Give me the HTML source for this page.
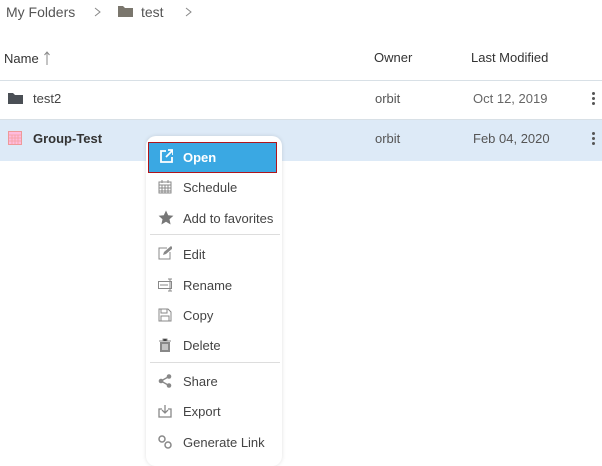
<!DOCTYPE html>
<html><head><style>
body{margin:0;width:602px;height:460px;background:#fff;font-family:"Liberation Sans",sans-serif;position:relative;overflow:hidden;color:#333}
.a{position:absolute;white-space:nowrap}
.menu{position:absolute;left:146px;top:136px;width:136px;height:330px;background:#fff;border-radius:10px;box-shadow:0 0 4px rgba(0,0,0,.12)}
.it{position:absolute;left:37px;font-size:13px;color:#444}
.ic{position:absolute;left:12px;width:14px;height:14px}
.sep{position:absolute;left:4px;width:130px;height:1px;background:#ddd}
.kb{position:absolute;left:592px;width:3px}
.kb i{display:block;width:3px;height:3px;border-radius:50%;background:#555;margin-bottom:2px}
</style></head><body>
<div class="a" style="left:6px;top:4px;font-size:14px;color:#555">My Folders</div>
<svg class="a" style="left:94px;top:7px" width="8" height="10"><path d="M1 1l5 4-5 4" stroke="#888" fill="none"/></svg>
<svg class="a" style="left:118px;top:5px" width="15" height="12"><path d="M0 1h5l2 2h8v9H0z" fill="#7a766d"/></svg>
<div class="a" style="left:141px;top:4px;font-size:14px;color:#555">test</div>
<svg class="a" style="left:185px;top:7px" width="8" height="10"><path d="M1 1l5 4-5 4" stroke="#888" fill="none"/></svg>
<div class="a" style="left:4px;top:51px;font-size:13px;color:#333">Name</div>
<svg class="a" style="left:44px;top:51px" width="6" height="14"><path d="M3 1v13M0.5 4L3 1l2.5 3" stroke="#888" fill="none"/></svg>
<div class="a" style="left:374px;top:50px;font-size:13px;color:#333">Owner</div>
<div class="a" style="left:471px;top:50px;font-size:13px;color:#333">Last Modified</div>
<div class="a" style="left:0;top:80px;width:602px;height:1px;background:#d8e0e6"></div>
<svg class="a" style="left:8px;top:92px" width="15" height="12"><path d="M0 1h5l2 2h8v9H0z" fill="#4a4f55"/></svg>
<div class="a" style="left:33px;top:91px;font-size:13px;color:#444">test2</div>
<div class="a" style="left:375px;top:91px;font-size:13px;color:#555">orbit</div>
<div class="a" style="left:473px;top:91px;font-size:13px;color:#666">Oct 12, 2019</div>
<div class="kb" style="top:92px"><i></i><i></i><i></i></div>
<div class="a" style="left:0;top:119px;width:602px;height:41px;background:#ddeaf7;border-top:1px solid #d8e0e6"></div>
<svg class="a" style="left:8px;top:131px" width="14" height="14"><rect x="0.5" y="0.5" width="13" height="13" fill="#fbd" stroke="#e99"/><path d="M1 4h12M4 4v9M7 4v9M10 4v9M1 7h12M1 10h12" stroke="#f5a0a0" stroke-width=".8"/></svg>
<div class="a" style="left:33px;top:131px;font-size:13px;color:#333;font-weight:bold">Group-Test</div>
<div class="a" style="left:375px;top:131px;font-size:13px;color:#555">orbit</div>
<div class="a" style="left:473px;top:131px;font-size:13px;color:#555">Feb 04, 2020</div>
<div class="kb" style="top:132px"><i></i><i></i><i></i></div>
<div class="menu">
<div style="position:absolute;left:2px;top:6px;width:127px;height:29px;background:#3aa8e3;border:1.5px solid #b0151b"></div>
<svg class="ic" style="top:13px;left:13px" width="15" height="15"><path d="M7 2H2v11h11V8M9 1h5v5M14 1L7 8" stroke="#fff" stroke-width="1.8" fill="none"/></svg>
<div class="it" style="top:14px;color:#fff;font-weight:bold">Open</div>
<svg class="ic" style="top:44px"><rect x="1" y="2" width="12" height="11" fill="none" stroke="#888"/><path d="M1 5h12M4 5v8M7 5v8M10 5v8M1 8h12M1 11h12M4 0v3M10 0v3" stroke="#888"/></svg>
<div class="it" style="top:44px">Schedule</div>
<svg class="ic" style="top:74px;width:16px;height:16px"><path d="M8 0.5l2.2 4.8 5.2.5-3.9 3.5 1.1 5.2L8 11.8 3.4 14.5l1.1-5.2L.6 5.8l5.2-.5z" fill="#777"/></svg>
<div class="it" style="top:75px">Add to favorites</div>
<div class="sep" style="top:98px"></div>
<svg class="ic" style="top:110px"><path d="M9 2H1v11h11V6" stroke="#888" fill="none"/><path d="M5 9l1-3 7-6 2 2-7 6z" fill="#888"/></svg>
<div class="it" style="top:111px">Edit</div>
<svg class="ic" style="top:142px;width:17px"><rect x="0.5" y="3.5" width="13" height="7" fill="none" stroke="#888"/><path d="M12 1v12M10 1h4M10 13h4M2 7h8" stroke="#888"/></svg>
<div class="it" style="top:142px">Rename</div>
<svg class="ic" style="top:172px"><path d="M1 1h9l3 3v9H1z M3 1v4h6V1 M3 13V8h8v5" stroke="#888" fill="none"/></svg>
<div class="it" style="top:172px">Copy</div>
<svg class="ic" style="top:202px"><path d="M1 3h12M5 3V1h4v2" stroke="#888"/><path d="M2 4h10v10H2z" fill="#888"/><path d="M5 6v6M7 6v6M9 6v6" stroke="#fff"/></svg>
<div class="it" style="top:202px">Delete</div>
<div class="sep" style="top:226px"></div>
<svg class="ic" style="top:238px"><circle cx="3" cy="7" r="2.3" fill="#888"/><circle cx="11" cy="2.5" r="2.3" fill="#888"/><circle cx="11" cy="11.5" r="2.3" fill="#888"/><path d="M3 7l8-4.5M3 7l8 4.5" stroke="#888" stroke-width="1.3"/></svg>
<div class="it" style="top:238px">Share</div>
<svg class="ic" style="top:268px"><path d="M4 5H1v8h12V5h-3M7 1v8M4 6l3 3 3-3" stroke="#888" fill="none" stroke-width="1.3"/></svg>
<div class="it" style="top:268px">Export</div>
<svg class="ic" style="top:299px"><circle cx="4" cy="4" r="3" stroke="#888" fill="none" stroke-width="1.5"/><circle cx="10" cy="10" r="3" stroke="#888" fill="none" stroke-width="1.5"/></svg>
<div class="it" style="top:299px">Generate Link</div>
</div>
</body></html>
